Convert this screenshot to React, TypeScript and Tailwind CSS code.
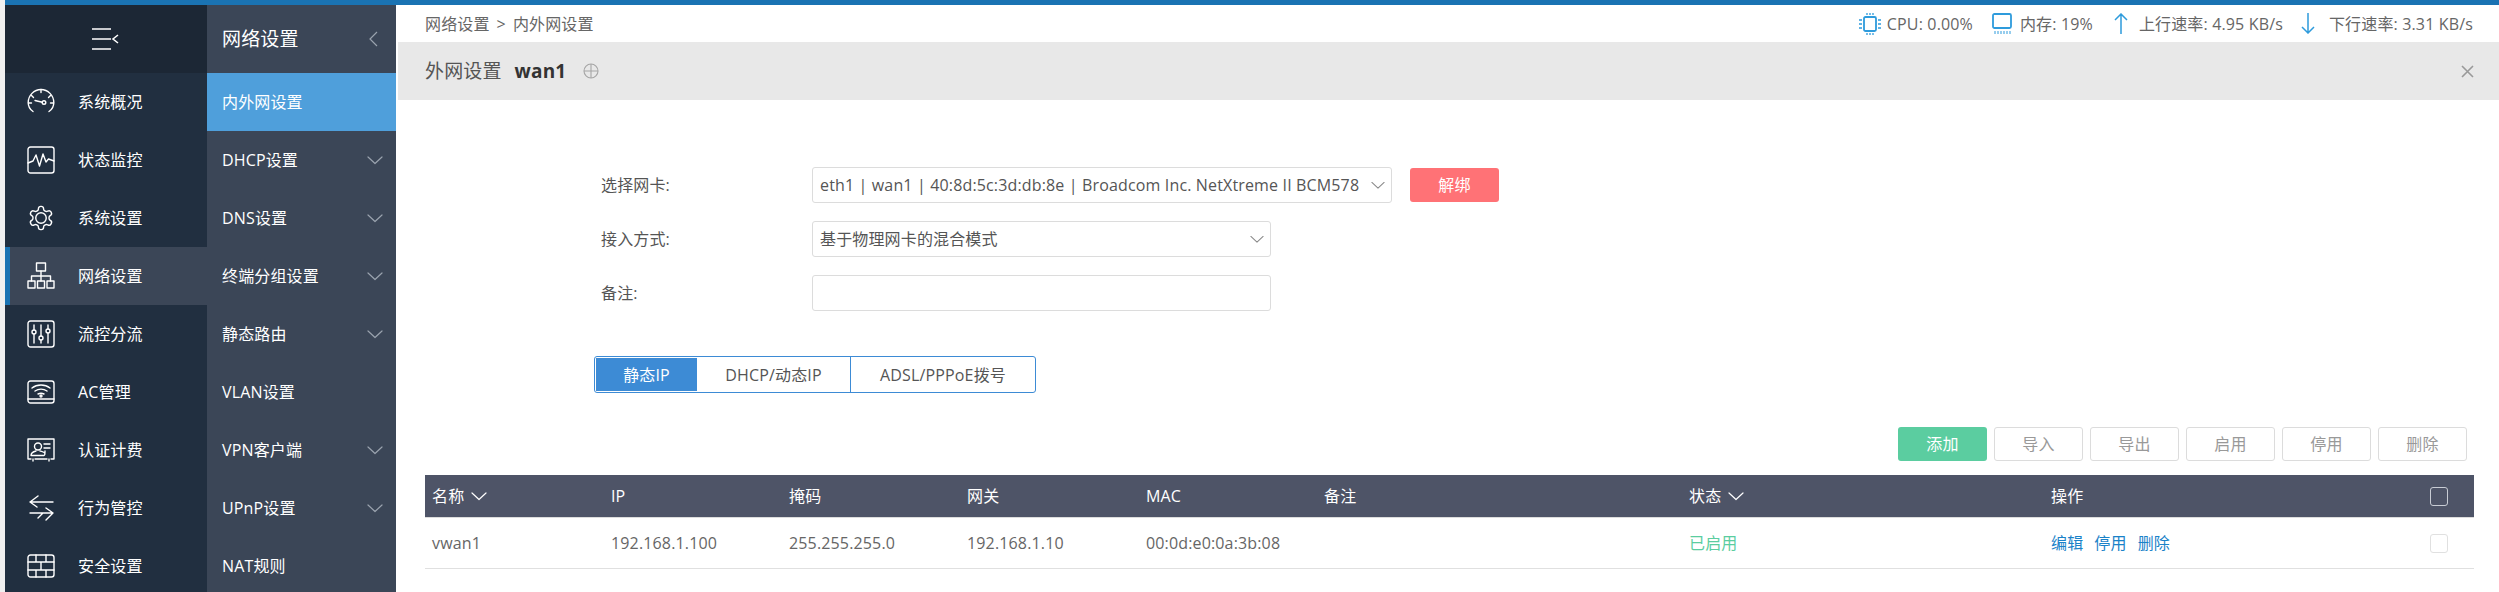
import React from "react";

const S = { fill: "none", stroke: "currentColor", strokeWidth: 1.4, strokeLinecap: "round" as const, strokeLinejoin: "round" as const };

const Chevron = ({ className = "" }: { className?: string }) => (
  <svg width="16" height="9" viewBox="0 0 16 9" className={className} {...S} strokeWidth={1.2}>
    <path d="M1 1l7 6.5L15 1" />
  </svg>
);

const Gauge = () => (
  <svg width="28" height="28" viewBox="0 0 28 28" {...S}>
    <path d="M6 23.5C3 21.5 1.2 18 1.2 14.5 1.2 7.5 7 1.5 14 1.5s12.800 6 12.800 13c0 3.500-1.800 7-4.800 9" />
    <path d="M14 1.500v3M4.500 7.500l2 2M23.500 7.500l-2 2M1.500 15h3M26.500 15h-3" />
    <circle cx="17" cy="14.500" r="1.800" />
    <path d="M15.300 14.200L8 12.500" />
  </svg>
);
const Pulse = () => (
  <svg width="28" height="28" viewBox="0 0 28 28" {...S}>
    <rect x="1" y="1" width="26" height="26" rx="2.500" />
    <path d="M1 17l5-2 3-6 3.500 11L16 8l3 8 2.500-3 5.500 2" />
  </svg>
);
const Gear = () => (
  <svg width="28" height="28" viewBox="0 0 24 24" {...S} strokeWidth={1.200}>
    <path d="M12.220 2h-.440a2 2 0 0 0-2 2v.180a2 2 0 0 1-1 1.730l-.430.250a2 2 0 0 1-2 0l-.150-.080a2 2 0 0 0-2.730.730l-.220.380a2 2 0 0 0 .730 2.730l.150.100a2 2 0 0 1 1 1.720v.510a2 2 0 0 1-1 1.740l-.150.090a2 2 0 0 0-.730 2.730l.220.380a2 2 0 0 0 2.730.730l.150-.080a2 2 0 0 1 2 0l.430.250a2 2 0 0 1 1 1.730V20a2 2 0 0 0 2 2h.440a2 2 0 0 0 2-2v-.180a2 2 0 0 1 1-1.730l.430-.250a2 2 0 0 1 2 0l.150.080a2 2 0 0 0 2.730-.730l.220-.390a2 2 0 0 0-.730-2.730l-.150-.080a2 2 0 0 1-1-1.740v-.500a2 2 0 0 1 1-1.740l.150-.090a2 2 0 0 0 .730-2.730l-.220-.380a2 2 0 0 0-2.730-.730l-.150.080a2 2 0 0 1-2 0l-.430-.250a2 2 0 0 1-1-1.730V4a2 2 0 0 0-2-2z" />
    <circle cx="12" cy="12" r="4.500" />
  </svg>
);
const Net = () => (
  <svg width="28" height="28" viewBox="0 0 28 28" {...S}>
    <rect x="9.500" y="1" width="9" height="8" />
    <path d="M14 9v5M4.500 19v-5h19v5M14 14v5" />
    <rect x="1" y="19" width="7" height="7" />
    <rect x="10.500" y="19" width="7" height="7" />
    <rect x="20" y="19" width="7" height="7" />
  </svg>
);
const Sliders = () => (
  <svg width="28" height="28" viewBox="0 0 28 28" {...S}>
    <rect x="1" y="1" width="26" height="26" rx="2.500" />
    <path d="M7 5v5M7 14v9M14 5v11M14 20v3M21 5v4M21 13v10" />
    <circle cx="7" cy="12" r="2" /><circle cx="14" cy="18" r="2" /><circle cx="21" cy="11" r="2" />
  </svg>
);
const Wifi = () => (
  <svg width="28" height="24" viewBox="0 0 28 24" {...S}>
    <rect x="1" y="1" width="26" height="22" rx="2.500" />
    <path d="M1 19h26M5 8c5-4 13-4 18 0M8 11c3.500-2.500 8.500-2.500 12 0M11 14c2-1 4-1 6 0" />
    <circle cx="14" cy="16" r="1" />
  </svg>
);
const Card = () => (
  <svg width="28" height="24" viewBox="0 0 28 24" {...S}>
    <path d="M4 21H1V1h26v20h-3M8 21h12" />
    <circle cx="11" cy="8.500" r="3.500" />
    <path d="M4 17.500c0-3 3-4 5-4.500M18 13c0 0 0 4.500-1 4.500H5M13 13c2 .500 5 1 5 3M17 6h6M17 10h6" />
    <path d="M6 21v2M22 21v2" />
  </svg>
);
const Swap = () => (
  <svg width="28" height="28" viewBox="0 0 28 28" {...S}>
    <path d="M26 8H3l8-6M3 8l7 5M3 19h23l-7-5M26 19l-7 7M16 19l-5 5" />
  </svg>
);
const Wall = () => (
  <svg width="28" height="24" viewBox="0 0 28 24" {...S}>
    <rect x="1" y="1" width="26" height="22" rx="2.500" />
    <path d="M1 8h26M1 16h26M9 1v7M19 1v7M14 8v8M9 16v7M19 16v7" />
  </svg>
);

const primary: [React.ReactNode, string, boolean?][] = [
  [<Gauge />, "系统概况"],
  [<Pulse />, "状态监控"],
  [<Gear />, "系统设置"],
  [<Net />, "网络设置", true],
  [<Sliders />, "流控分流"],
  [<Wifi />, "AC管理"],
  [<Card />, "认证计费"],
  [<Swap />, "行为管控"],
  [<Wall />, "安全设置"],
];

const secondary: [string, boolean, boolean?][] = [
  ["内外网设置", false, true],
  ["DHCP设置", true],
  ["DNS设置", true],
  ["终端分组设置", true],
  ["静态路由", true],
  ["VLAN设置", false],
  ["VPN客户端", true],
  ["UPnP设置", true],
  ["NAT规则", false],
];

const Field = ({ label, width, children, after }: { label: string; width: string; children?: React.ReactNode; after?: React.ReactNode }) => (
  <div className="flex items-center h-[36px]">
    <span className="w-[211px] text-[#555]">{label}</span>
    <div className={`${width} h-[36px] border border-[#dcdcdc] rounded-[3px] bg-white flex items-center justify-between pl-[7px] pr-[6px] text-[#555] whitespace-nowrap overflow-hidden`}>
      {children}
    </div>
    {after}
  </div>
);

const Th = ({ children, arrow }: { children: React.ReactNode; arrow?: boolean }) => (
  <div className="flex items-center pl-[7px]">
    <span>{children}</span>
    {arrow && <Chevron className="ml-[7px] text-white" />}
  </div>
);

export default function App() {
  return (
    <div className="w-[2499px] h-[592px] overflow-hidden flex bg-white text-[16px] tracking-[0.15px] font-['Open_Sans','Noto_Sans_CJK_SC',sans-serif]">
      <div className="w-[5px] shrink-0 bg-[#f0f0f0]" />
      <div className="flex-1 flex flex-col min-w-0">
        <div className="h-[5px] shrink-0 bg-[#1a73b3]" />
        <div className="flex-1 flex min-h-0">
          <aside className="w-[202px] shrink-0 bg-[#212f40] text-white">
            <div className="h-[68px] bg-[#1c2735] flex items-center justify-center pr-[2px]">
              <svg width="28" height="24" viewBox="0 0 28 24" fill="none" stroke="white" strokeWidth="1.300">
                <path d="M1 2h19M1 12h19M1 22h19" />
                <path d="M27 8l-5 4 5 4" strokeWidth="1.600" />
              </svg>
            </div>
            {primary.map(([icon, label, active]) => (
              <div key={label} className={`h-[58px] flex items-center ${active ? "bg-[#3b4657] border-l-[5px] border-[#1a73b3] pl-[17px]" : "pl-[22px]"}`}>
                <span className="w-[28px] flex justify-center">{icon}</span>
                <span className="ml-[23px]">{label}</span>
              </div>
            ))}
          </aside>
          <nav className="w-[189px] shrink-0 bg-[#3b4657] text-white">
            <div className="h-[68px] flex items-center justify-between pl-[15px] pr-[18px]">
              <span className="text-[19px]">网络设置</span>
              <svg width="9" height="16" viewBox="0 0 9 16" fill="none" stroke="#9aa3ae" strokeWidth="1.200"><path d="M8 1L1 8l7 7" /></svg>
            </div>
            {secondary.map(([label, chev, active]) => (
              <div key={label} className={`h-[58px] flex items-center justify-between pl-[15px] pr-[13px] ${active ? "bg-[#4f9fdb]" : ""}`}>
                <span>{label}</span>
                {chev && <Chevron className="text-[#9aa3ae]" />}
              </div>
            ))}
          </nav>
          <main className="flex-1 min-w-0 text-[#555]">
            <div className="h-[37px] flex items-center justify-between pl-[29px] pr-[26px] text-[#666]">
              <span>网络设置<span className="mx-[7px]">&gt;</span>内外网设置</span>
              <div className="flex items-center">
                <svg width="22" height="24" viewBox="0 0 22 24" fill="none" stroke="#2e9bdc" strokeWidth="1.300">
                  <rect x="5" y="5" width="12" height="14" rx="1.500" strokeWidth="1.800" />
                  <path d="M8 1v2M11 1v2M14 1v2M8 21v2M11 21v2M14 21v2M0 8h3M0 12h3M0 16h3M19 8h3M19 12h3M19 16h3" />
                </svg>
                <span className="ml-[6px]">CPU: 0.00%</span>
                <svg className="ml-[19px]" width="20" height="22" viewBox="0 0 20 22" fill="none" stroke="#2e9bdc" strokeWidth="1.800">
                  <rect x="1" y="1" width="18" height="14" rx="1.500" />
                  <path d="M3 18v3M6 18v3M9 18v3M12 18v3M15 18v3M18 18v3" strokeWidth="1" />
                </svg>
                <span className="ml-[8px]">内存: 19%</span>
                <svg className="ml-[21px]" width="14" height="21" viewBox="0 0 14 21" fill="none" stroke="#2e9bdc" strokeWidth="1.500"><path d="M7 21V1M1 7l6-6 6 6" /></svg>
                <span className="ml-[11px]">上行速率: 4.95 KB/s</span>
                <svg className="ml-[18px]" width="14" height="21" viewBox="0 0 14 21" fill="none" stroke="#2e9bdc" strokeWidth="1.500"><path d="M7 0v20M1 14l6 6 6-6" /></svg>
                <span className="ml-[14px]">下行速率: 3.31 KB/s</span>
              </div>
            </div>
            <div className="ml-[2px] h-[58px] bg-[#e8e8e8] flex items-center pl-[27px] pr-[25px] text-[19px]">
              <span className="text-[#555]">外网设置</span>
              <span className="ml-[13px] font-bold text-[#333]">wan1</span>
              <svg className="ml-[17px]" width="16" height="16" viewBox="0 0 16 16" fill="none" stroke="#a5a5a5" strokeWidth="1.100"><circle cx="8" cy="8" r="7" /><path d="M8 1v14M1 8h14" /></svg>
              <svg className="ml-auto" width="13" height="13" viewBox="0 0 13 13" fill="none" stroke="#999" strokeWidth="1.600"><path d="M1 1l11 11M12 1L1 12" /></svg>
            </div>

            <div className="pt-[67px] pl-[205px] flex flex-col gap-[18px]">
              <Field
                label="选择网卡:"
                width="w-[580px]"
                after={<button className="ml-[18px] w-[89px] h-[34px] rounded-[3px] bg-[#ff7276] text-white">解绑</button>}
              >
                <span>eth1 | wan1 | 40:8d:5c:3d:db:8e | Broadcom Inc. NetXtreme II BCM578</span>
                <Chevron className="shrink-0 text-[#888] w-[14px]" />
              </Field>
              <Field label="接入方式:" width="w-[459px]">
                <span>基于物理网卡的混合模式</span>
                <Chevron className="shrink-0 text-[#888] w-[14px]" />
              </Field>
              <Field label="备注:" width="w-[459px]" />
            </div>

            <div className="mt-[45px] ml-[198px] w-[442px] h-[37px] border border-[#3d8bd5] rounded-[3px] flex text-[#555]">
              <div className="w-[101px] m-[1px] mr-0 bg-[#3d8bd5] text-white flex items-center justify-center">静态IP</div>
              <div className="w-[154px] border-r border-[#3d8bd5] flex items-center justify-center">DHCP/动态IP</div>
              <div className="flex-1 flex items-center justify-center">ADSL/PPPoE拨号</div>
            </div>

            <div className="mt-[34px] flex justify-end gap-[7px] pr-[32px]">
              <button className="w-[89px] h-[34px] rounded-[3px] bg-[#5bcda0] text-white">添加</button>
              {["导入", "导出", "启用", "停用", "删除"].map((t) => (
                <button key={t} className="w-[89px] h-[34px] rounded-[3px] border border-[#dcdcdc] text-[#999] bg-white">{t}</button>
              ))}
            </div>

            <div className="mt-[14px] ml-[29px] mr-[25px]">
              <div className="h-[43px] bg-[#4e5467] border-b border-[#dcdcdc] text-white grid grid-cols-[179px_178px_178px_179px_178px_365px_362px_1fr] items-center">
                <Th arrow>名称</Th>
                <Th>IP</Th>
                <Th>掩码</Th>
                <Th>网关</Th>
                <Th>MAC</Th>
                <Th>备注</Th>
                <Th arrow>状态</Th>
                <div className="flex items-center justify-between pl-[7px] pr-[26px]">
                  <span>操作</span>
                  <span className="w-[18px] h-[19px] border border-[#c8ccd4] rounded-[3px]" />
                </div>
              </div>
              <div className="h-[51px] border-b border-[#e0e0e0] text-[#666] grid grid-cols-[179px_178px_178px_179px_178px_365px_362px_1fr] items-center">
                <div className="pl-[7px]">vwan1</div>
                <div className="pl-[7px]">192.168.1.100</div>
                <div className="pl-[7px]">255.255.255.0</div>
                <div className="pl-[7px]">192.168.1.10</div>
                <div className="pl-[7px]">00:0d:e0:0a:3b:08</div>
                <div />
                <div className="pl-[7px] text-[#5bcda0]">已启用</div>
                <div className="flex items-center justify-between pl-[7px] pr-[26px] text-[#1a82c8]">
                  <span className="flex gap-[11px]"><span>编辑</span><span>停用</span><span>删除</span></span>
                  <span className="w-[18px] h-[19px] border border-[#e0e0e0] rounded-[3px]" />
                </div>
              </div>
            </div>
          </main>
        </div>
      </div>
    </div>
  );
}
